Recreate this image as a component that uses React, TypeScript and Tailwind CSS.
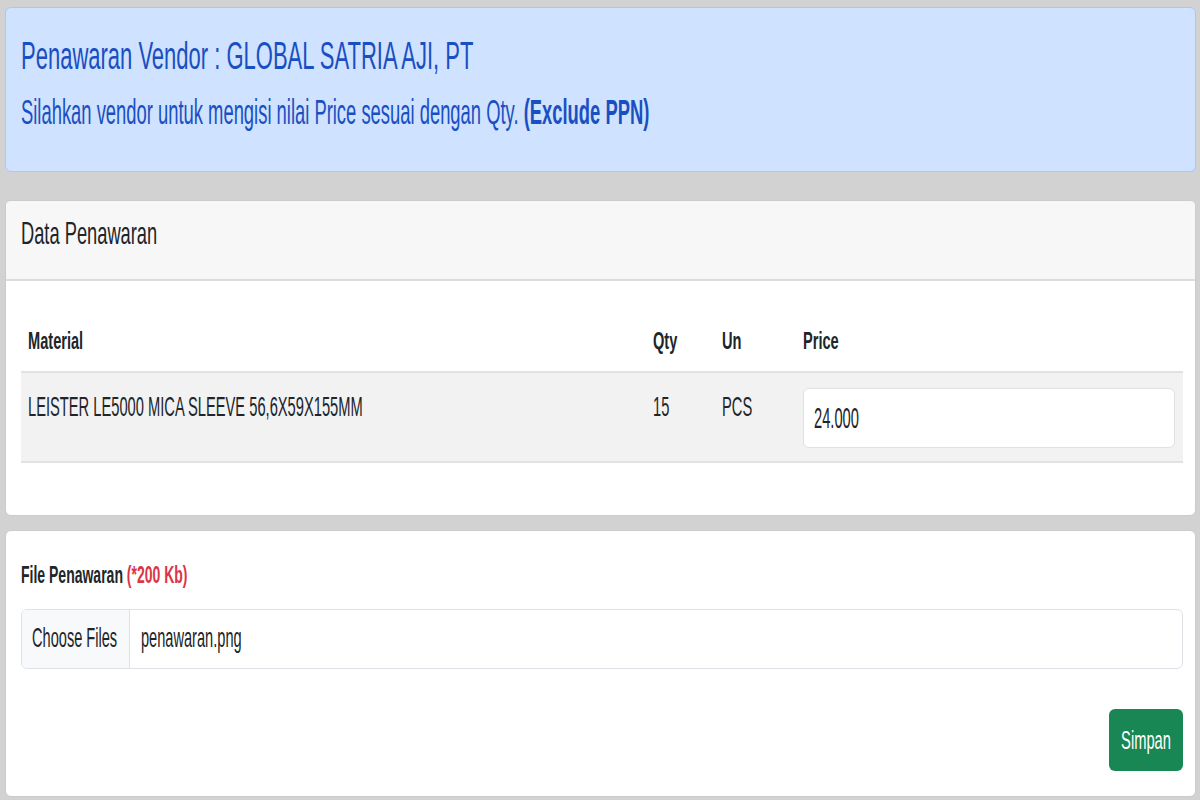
import type { ReactNode } from 'react';

// the reference text is tall and narrow, so glyphs get a vertical stretch
function Tall({ cls, children }: { cls: string; children: ReactNode }) {
  return <span className={`inline-block origin-center ${cls}`}>{children}</span>;
}

const rows = [
  { material: 'LEISTER LE5000 MICA SLEEVE 56,6X59X155MM', qty: 15, un: 'PCS', price: '24.000' },
];

export default function App() {
  return (
    <main className="min-h-screen w-[1200px] bg-[#d2d2d2] pt-[7px] pb-[3px] pl-[5px] pr-[4px] font-['Liberation_Sans',Arial,sans-serif] text-[#212529]">
      {/* alert */}
      <div className="h-[165px] rounded-[6px] border border-[#a9c8f9] bg-[#cfe2ff] pl-[15px] pt-[30px] text-[#1a4fc2]">
        <div className="h-[36px] text-[22px] leading-[36px]">
          <Tall cls="scale-y-[1.8]">Penawaran Vendor : GLOBAL SATRIA AJI, PT</Tall>
        </div>
        <div className="mt-[23px] h-[30px] text-[18.4px] leading-[30px]">
          <Tall cls="scale-y-[1.95]">
            Silahkan vendor untuk mengisi nilai Price sesuai dengan Qty. <b className="font-bold">(Exclude PPN)</b>
          </Tall>
        </div>
      </div>

      {/* data penawaran */}
      <section className="mt-[28px] overflow-hidden rounded-[6px] border border-[#cbcbcb] bg-white">
        <div className="h-[80px] border-b-2 border-[#dcdcdc] bg-[#f7f7f7] pl-[15px] pt-[17px]">
          <div className="h-[30px] text-[18.3px] leading-[30px]">
            <Tall cls="scale-y-[1.75]">Data Penawaran</Tall>
          </div>
        </div>
        <div className="pl-[15px] pr-[12px] pt-[20px] pb-[52px]">
          <div className="grid h-[72px] grid-cols-[625px_69px_81px_1fr] border-b-2 border-[#e2e2e2] pt-[28px] text-[14.6px] font-bold leading-[24px]">
            <div className="px-[7px]"><Tall cls="scale-y-[1.66]">Material</Tall></div>
            <div className="px-[7px]"><Tall cls="scale-y-[1.66]">Qty</Tall></div>
            <div className="px-[7px]"><Tall cls="scale-y-[1.66]">Un</Tall></div>
            <div className="px-[7px]"><Tall cls="scale-y-[1.66]">Price</Tall></div>
          </div>
          {rows.map((r, i) => (
            <div
              key={i}
              className="grid h-[90px] grid-cols-[625px_69px_81px_1fr] border-b-2 border-[#e2e2e2] bg-[#f2f2f2] text-[14.7px] leading-[24px]"
            >
              <div className="px-[7px] pt-[21px]"><Tall cls="scale-y-[1.9]">{r.material}</Tall></div>
              <div className="px-[7px] pt-[21px]"><Tall cls="scale-y-[1.9]">{r.qty}</Tall></div>
              <div className="px-[7px] pt-[21px]"><Tall cls="scale-y-[1.9]">{r.un}</Tall></div>
              <div className="pl-[7px] pr-[8px] pt-[15px]">
                <div className="flex h-[60px] items-center rounded-[6px] border border-[#dee2e6] bg-white pl-[10px]">
                  <Tall cls="scale-y-[1.95]">{r.price}</Tall>
                </div>
              </div>
            </div>
          ))}
        </div>
      </section>

      {/* file upload */}
      <section className="mt-[14px] rounded-[6px] border border-[#cbcbcb] bg-white pl-[15px] pr-[12px] pt-[32px] pb-[25px]">
        <div className="h-[24px] text-[14px] font-bold leading-[24px]">
          <Tall cls="scale-y-[1.67]">
            File Penawaran <span className="text-[#dc3545]">(*200 Kb)</span>
          </Tall>
        </div>
        <div className="mt-[22px] flex h-[60px] overflow-hidden rounded-[6px] border border-[#dee2e6] text-[14.6px]">
          <div className="flex w-[108px] items-center border-r border-[#dee2e6] bg-[#f8f9fa] pl-[10px]">
            <Tall cls="scale-y-[1.95]">Choose Files</Tall>
          </div>
          <div className="flex flex-1 items-center pl-[11px]">
            <Tall cls="scale-y-[1.95]">penawaran.png</Tall>
          </div>
        </div>
        <div className="mt-[40px] flex justify-end">
          <button className="flex h-[62px] w-[74px] items-center justify-center rounded-[6px] bg-[#198754] text-[14.7px] text-white">
            <Tall cls="scale-y-[1.8]">Simpan</Tall>
          </button>
        </div>
      </section>
    </main>
  );
}
